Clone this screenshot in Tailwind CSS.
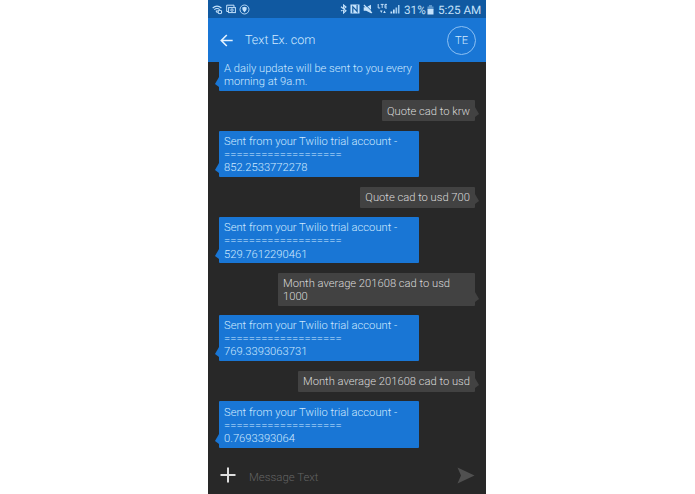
<!DOCTYPE html>
<html lang="en">
<head>
<meta charset="utf-8">
<title>Messages</title>
<script src="https://cdn.jsdelivr.net/npm/@tailwindcss/browser@4"></script>
</head>
<body class="bg-white h-[494px] overflow-hidden">
<div class="ml-[208px] w-[278px] h-[494px] bg-[#282828] flex flex-col overflow-hidden font-['Roboto',sans-serif] font-light [text-rendering:geometricPrecision]">
  <div class="h-[18px] shrink-0 bg-[#1059a1] flex items-center justify-between pl-[4px] pr-[5px] text-[#c4e2fb]">
    <div class="flex items-center gap-[3px]">
      <svg width="11" height="11" viewBox="0 0 11 11" fill="none" stroke="currentColor" stroke-width="1.1"><path d="M.7 4Q5 .2 9.4 4M2.3 5.7Q5 3.3 7.7 5.7M4 7.2Q5 6.3 6 7.2"/><circle cx="7.9" cy="8" r="1.8"/><path d="M4 7l1.5 2"/></svg>
      <svg width="10" height="10" viewBox="0 0 10 10" fill="none" stroke="currentColor"><path d="M2.5 7.5H.7V1.2H8V3"/><rect x="2.6" y="3.6" width="6.8" height="5" /><circle cx="6" cy="6.1" r="1.2"/></svg>
      <svg width="11" height="11" viewBox="0 0 11 11"><circle cx="5.5" cy="5.5" r="4.5" fill="none" stroke="currentColor" stroke-width=".9"/><path d="M3.2 3.5L5.5 2.7l2.3.8Q8 6.8 5.5 8.4 3 6.8 3.2 3.5z" fill="currentColor"/></svg>
    </div>
    <div class="flex items-center">
      <svg class="mr-[3px]" width="7" height="10" viewBox="0 0 7 10" fill="none" stroke="currentColor" stroke-width="1.1"><path d="M1 2.8l5 4L3.6 9V1L6 3.1 1 7.1"/></svg>
      <svg class="mr-[3px]" width="10" height="10" viewBox="0 0 10 10"><path d="M.5.5h9v9h-9z" fill="currentColor"/><path d="M2.8 8.8V2.7l4.3 4.8V1" fill="none" stroke="#1059a1" stroke-width="1.2"/></svg>
      <svg class="mr-[4px]" width="10" height="10" viewBox="0 0 10 10"><path d="M.7 3.2h2.4L8 .8v8.4L3.1 6.8H.7z" fill="currentColor"/><path d="M1.6 0l8 8" stroke="#1059a1" stroke-width="1"/><path d="M.9 1l8 8" stroke="currentColor" stroke-width="1.1"/></svg>
      <svg class="mr-[2px]" width="11" height="12" viewBox="0 0 11 12"><path d="M1.2 1v4h2M3.7 1.4h3M5.2 1v4M10 1.4H8V5h2M8 3.1h1.8" fill="none" stroke="currentColor" stroke-width=".95"/><path d="M3 7.5h2.6L4.3 10zM6.2 10h2.6L7.5 7.5z" fill="currentColor"/></svg>
      <svg class="mr-[4px]" width="10" height="10" viewBox="0 0 10 10"><path d="M.5 9.5V7.5h1.7v2zM3 9.5V5.5h1.7v4z" fill="currentColor"/><path d="M5.5 9.5v-6h1.7v6zM8 9.5V1h1.5v8.5z" fill="#a0cbef"/></svg>
      <span class="text-[11.7px] leading-[19px] pt-[2px] font-normal w-[22px] whitespace-nowrap">31%</span>
      <svg class="ml-[1px] mr-[4px]" width="7" height="11" viewBox="0 0 7 11"><path d="M2 1h3v1.5h1.5v3h-6v-3H2z" fill="#5b96cb"/><path d="M.5 5h6v5.5h-6z" fill="currentColor"/></svg>
      <span class="text-[11.7px] leading-[19px] pt-[2px] font-normal w-[43px] whitespace-nowrap">5:25 AM</span>
    </div>
  </div>
  <div class="h-[44px] shrink-0 bg-[#1976d5] flex items-center pl-[12px] pr-[10px] text-[#d2eaff]">
    <svg width="13" height="13" viewBox="0 0 13 13" fill="none" stroke="#e4f2ff" stroke-width="1.6"><path d="M12.7 6.5H1.4M6.8 1L1.3 6.5 6.8 12"/></svg>
    <span class="ml-[12px] text-[12.5px] leading-[18px] pt-[2px]">Text Ex. com</span>
    <span class="ml-auto w-[29px] h-[29px] rounded-full border border-[#8cc0f3] flex items-center justify-center text-[11.2px] leading-[16px] pt-[2px]">TE</span>
  </div>
  <div class="h-[394px] shrink-0 flex flex-col items-start gap-[9.5px] pl-[11px] pr-[11px] text-[11.2px] leading-[13.1px] text-[#cde8fe] whitespace-nowrap">
    <div class="relative w-[200px] h-[28.8px] bg-[#1976d5] rounded-b-[1px] pl-[5px]">A daily update will be sent to you every<br>morning at 9a.m.
      <svg class="absolute -left-[4px] bottom-[4px]" width="4" height="10" viewBox="0 0 4 10"><path d="M4 0v10L0 7z" fill="#1976d5"/></svg></div>
    <div class="relative self-end h-[21.2px] bg-[#424242] text-[#d8d8d8] rounded-[1px] px-[5px] pt-[4.6px]">Quote cad to krw
      <svg class="absolute -right-[4px] bottom-[4px]" width="4" height="10" viewBox="0 0 4 10"><path d="M0 0v10L4 7z" fill="#424242"/></svg></div>
    <div class="relative w-[200px] h-[46.1px] bg-[#1976d5] rounded-[1px] pl-[5px] pt-[4.1px]">Sent from your Twilio trial account -<br>===================<br>852.2533772278
      <svg class="absolute -left-[4px] bottom-[4px]" width="4" height="10" viewBox="0 0 4 10"><path d="M4 0v10L0 7z" fill="#1976d5"/></svg></div>
    <div class="relative self-end h-[21.2px] bg-[#424242] text-[#d8d8d8] rounded-[1px] px-[5px] pt-[4.6px]">Quote cad to usd 700
      <svg class="absolute -right-[4px] bottom-[4px]" width="4" height="10" viewBox="0 0 4 10"><path d="M0 0v10L4 7z" fill="#424242"/></svg></div>
    <div class="relative w-[200px] h-[46.1px] bg-[#1976d5] rounded-[1px] pl-[5px] pt-[4.1px]">Sent from your Twilio trial account -<br>===================<br>529.7612290461
      <svg class="absolute -left-[4px] bottom-[4px]" width="4" height="10" viewBox="0 0 4 10"><path d="M4 0v10L0 7z" fill="#1976d5"/></svg></div>
    <div class="relative self-end w-[197px] h-[32.8px] bg-[#424242] text-[#d8d8d8] rounded-[1px] px-[5px] pt-[4.2px]">Month average 201608 cad to usd<br>1000
      <svg class="absolute -right-[4px] bottom-[4px]" width="4" height="10" viewBox="0 0 4 10"><path d="M0 0v10L4 7z" fill="#424242"/></svg></div>
    <div class="relative w-[200px] h-[46.1px] bg-[#1976d5] rounded-[1px] pl-[5px] pt-[4.1px]">Sent from your Twilio trial account -<br>===================<br>769.3393063731
      <svg class="absolute -left-[4px] bottom-[4px]" width="4" height="10" viewBox="0 0 4 10"><path d="M4 0v10L0 7z" fill="#1976d5"/></svg></div>
    <div class="relative self-end h-[21.2px] bg-[#424242] text-[#d8d8d8] rounded-[1px] px-[5px] pt-[4.4px]">Month average 201608 cad to usd
      <svg class="absolute -right-[4px] bottom-[4px]" width="4" height="10" viewBox="0 0 4 10"><path d="M0 0v10L4 7z" fill="#424242"/></svg></div>
    <div class="relative w-[200px] h-[46.1px] bg-[#1976d5] rounded-[1px] pl-[5px] pt-[4.3px]">Sent from your Twilio trial account -<br>===================<br>0.7693393064
      <svg class="absolute -left-[4px] bottom-[4px]" width="4" height="10" viewBox="0 0 4 10"><path d="M4 0v10L0 7z" fill="#1976d5"/></svg></div>
  </div>
  <div class="h-[38px] flex items-center pl-[12px] pr-[11px]">
    <svg width="16" height="16" viewBox="0 0 16 16" stroke="#dedede" stroke-width="2"><path d="M8 .5v15M.5 8h15"/></svg>
    <span class="ml-[13px] mt-[6px] text-[11.4px] text-[#626262]">Message Text</span>
    <svg class="ml-auto" width="18" height="17" viewBox="0 0 18 17"><path d="M.5.5L17.5 8.5.5 16.5 4 8.5z" fill="#505050"/></svg>
  </div>
</div>
</body>
</html>
